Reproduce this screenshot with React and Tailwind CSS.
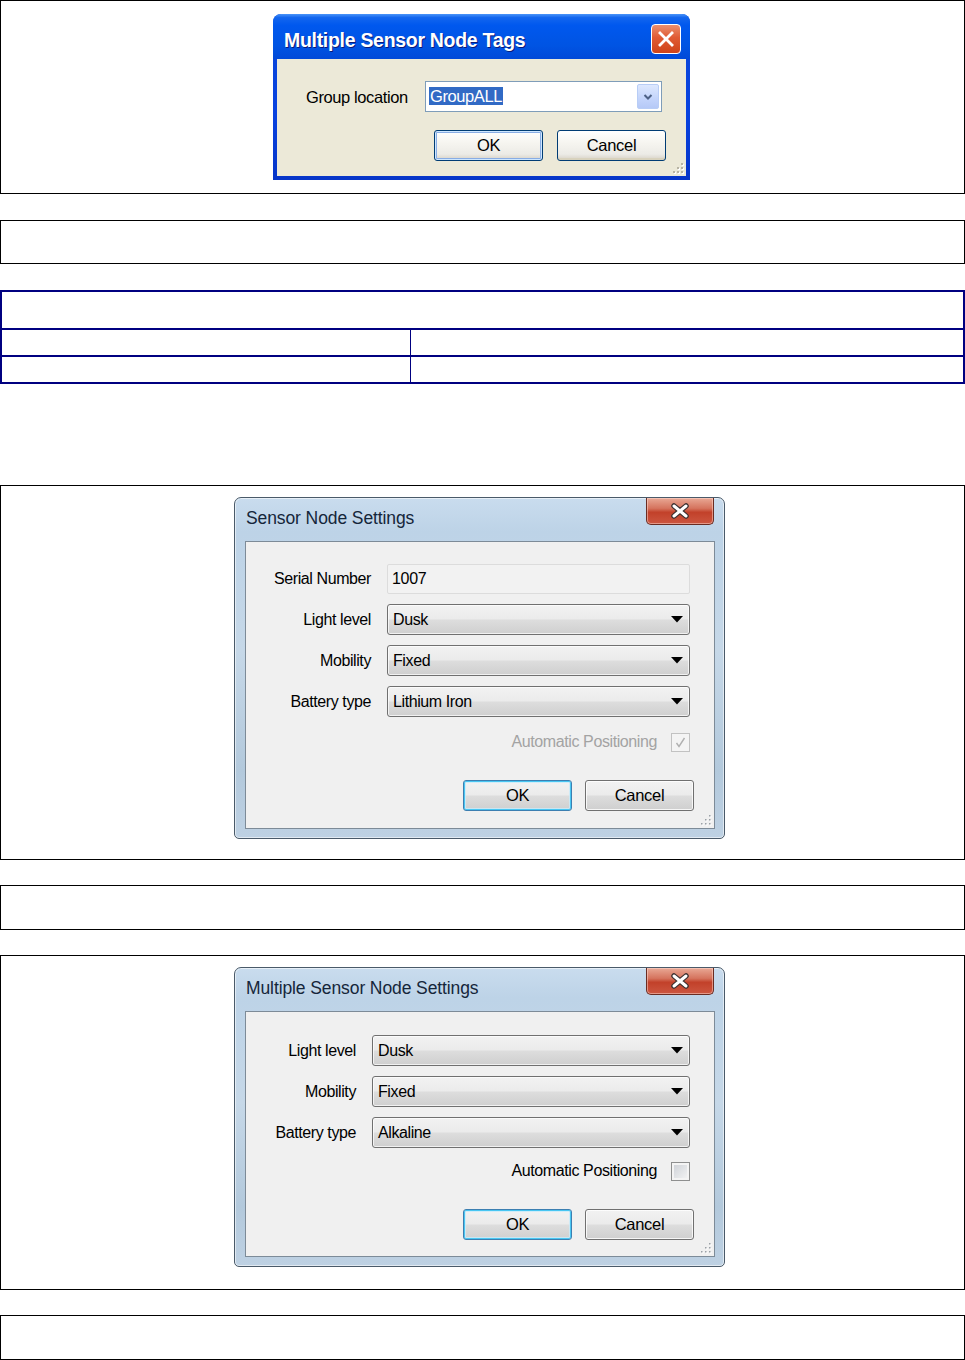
import React from "react";

const F = "font-['Liberation_Sans',Arial,sans-serif]";

function XPGrip() {
  const dots = [
    [10, 2], [10, 6], [6, 6], [10, 10], [6, 10], [2, 10],
  ];
  return (
    <svg width="14" height="14" viewBox="0 0 14 14">
      {dots.map(([x, y], i) => (
        <g key={i}>
          <rect x={x + 1} y={y + 1} width="2" height="2" fill="#ffffff" />
          <rect x={x} y={y} width="2" height="2" fill="#b8b4a4" />
        </g>
      ))}
    </svg>
  );
}

function W7Grip() {
  const dots = [
    [9, 1], [9, 5], [5, 5], [9, 9], [5, 9], [1, 9],
  ];
  return (
    <svg width="12" height="12" viewBox="0 0 12 12">
      {dots.map(([x, y], i) => (
        <g key={i}>
          <rect x={x + 1} y={y + 1} width="1.5" height="1.5" fill="#ffffff" />
          <rect x={x} y={y} width="1.5" height="1.5" fill="#9aa0a6" />
        </g>
      ))}
    </svg>
  );
}

function XPButton({ children, focused }) {
  return (
    <div
      className={`flex h-[31px] w-[109px] items-center justify-center rounded-[3px] border border-[#003c74] bg-[linear-gradient(180deg,#ffffff_0%,#f6f5f0_40%,#ecebe6_80%,#d6d0c5_100%)] text-[16.5px] tracking-[-0.3px] text-black ${
        focused ? "shadow-[inset_0_0_0_1px_#cee7ff,inset_0_0_0_2px_#89ade4]" : "shadow-[inset_0_-2px_0_#d8d2bd]"
      }`}
    >
      {children}
    </div>
  );
}

function XPDialog() {
  return (
    <div className={`flex h-[166px] w-[417px] flex-col rounded-t-[8px] bg-[linear-gradient(180deg,#0a47d8_0%,#0842e0_60%,#0635c8_100%)] ${F}`}>
      <div className="flex h-[46px] items-start justify-between rounded-t-[8px] bg-[linear-gradient(180deg,#4a94f8_0%,#1366ee_8%,#0058ee_25%,#0054e3_70%,#0149d8_100%)] pl-[11px] pr-[9px]">
        <div className="pt-[15px] text-[19.5px] font-bold leading-[22px] tracking-[-0.3px] text-white [text-shadow:1px_1px_0_#0a1a7a]">
          Multiple Sensor Node Tags
        </div>
        <div className="mt-[10px] flex h-[30px] w-[30px] items-center justify-center rounded-[4px] border border-white bg-[linear-gradient(180deg,#ea8f6e_0%,#e05b34_45%,#cf4319_100%)]">
          <svg width="18" height="18" viewBox="0 0 18 18">
            <path d="M3 3 L15 15 M15 3 L3 15" stroke="#ffffff" strokeWidth="2.8" strokeLinecap="square" />
          </svg>
        </div>
      </div>
      <div className="mx-[4px] mb-[4px] flex flex-1 flex-col bg-[#ece9d8]">
        <div className="mt-[22px] flex items-center pl-[29px]">
          <div className="w-[119px] pt-[2px] text-[16.5px] tracking-[-0.4px] text-black">Group location</div>
          <div className="flex h-[31px] w-[237px] items-center border border-[#7f9db9] bg-white pl-[3px] pr-[2px]">
            <div className="flex-1">
              <span className="bg-[#316ac5] px-[1px] text-[16.5px] leading-[20px] tracking-[-0.4px] text-white">GroupALL</span>
            </div>
            <div className="flex h-[25px] w-[22px] items-center justify-center rounded-[2px] border border-[#b8cdf6] bg-[linear-gradient(180deg,#dde8fe_0%,#c3d4fb_60%,#b5c9f7_100%)]">
              <svg width="10" height="8" viewBox="0 0 10 8">
                <path d="M1.5 2 L5 5.5 L8.5 2" stroke="#4d6185" strokeWidth="2" fill="none" />
              </svg>
            </div>
          </div>
        </div>
        <div className="mt-[18px] flex justify-end gap-[14px] pr-[20px]">
          <XPButton focused>OK</XPButton>
          <XPButton>Cancel</XPButton>
        </div>
        <div className="mt-auto flex justify-end pb-[1px] pr-[1px]">
          <XPGrip />
        </div>
      </div>
    </div>
  );
}

function Combo({ value, width }) {
  return (
    <div
      className={`flex h-[31px] ${width} items-center rounded-[3px] border border-[#707070] bg-[linear-gradient(180deg,#f2f2f2_0%,#ebebeb_48%,#dddddd_52%,#cfcfcf_100%)] pl-[5px] pr-[6px] shadow-[inset_0_0_0_1px_rgba(255,255,255,0.7)]`}
    >
      <div className="flex-1 text-[16px] tracking-[-0.4px] text-black">{value}</div>
      <svg width="12" height="7" viewBox="0 0 12 7">
        <path d="M0 0 L12 0 L6 6.5 Z" fill="#000000" />
      </svg>
    </div>
  );
}

function W7Button({ children, focused }) {
  return (
    <div
      className={`flex h-[31px] w-[109px] items-center justify-center rounded-[3px] border bg-[linear-gradient(180deg,#f2f2f2_0%,#ebebeb_48%,#dddddd_52%,#cfcfcf_100%)] text-[16.5px] tracking-[-0.3px] text-black ${
        focused
          ? "border-[#3c7fb1] shadow-[inset_0_0_0_1px_#48c6f2,inset_0_0_0_2px_rgba(200,235,250,0.8)]"
          : "border-[#707070] shadow-[inset_0_0_0_1px_rgba(255,255,255,0.8)]"
      }`}
    >
      {children}
    </div>
  );
}

function W7Check({ checked, disabled }) {
  return (
    <div
      className={`flex h-[19px] w-[19px] items-center justify-center border ${
        disabled
          ? "border-[#c2c2c2] bg-[#f4f4f4]"
          : "border-[#8e8f8f] bg-[linear-gradient(135deg,#cbcfd5_0%,#f6f6f6_100%)] shadow-[inset_0_0_0_2px_#f4f4f4]"
      }`}
    >
      {checked && (
        <svg width="13" height="13" viewBox="0 0 13 13">
          <path d="M2.5 7 L5 10.5 L10.5 2" stroke={disabled ? "#b0b0b0" : "#333"} strokeWidth="1.4" fill="none" />
        </svg>
      )}
    </div>
  );
}

function W7Dialog({ title, height, labelW, comboW, serial, rows, autoDisabled, autoChecked, padTop, checkMt, btnMt }) {
  return (
    <div
      className={`flex ${height} w-[491px] flex-col rounded-t-[7px] rounded-b-[5px] border border-[#4a5a69] bg-[linear-gradient(180deg,#c9dcee_0%,#bdd3e7_10%,#c6d8e8_45%,#b3c9dc_80%,#bed1e3_100%)] shadow-[inset_0_0_0_1px_rgba(255,255,255,0.55)] ${F}`}
    >
      <div className="flex h-[43px] items-start justify-between pl-[11px] pr-[10px]">
        <div className="pt-[10px] text-[17.5px] leading-[20px] tracking-[-0.1px] text-[#15263a]">{title}</div>
        <div className="flex h-[27px] w-[68px] items-center justify-center rounded-b-[5px] border border-t-0 border-[#6a2c22] bg-[linear-gradient(180deg,#e9a895_0%,#d5735d_40%,#c2412a_55%,#cc5640_100%)] shadow-[inset_0_0_0_1px_rgba(255,220,210,0.5)]">
          <svg width="22" height="16" viewBox="0 0 22 16">
            <path d="M5 3 L17 13 M17 3 L5 13" stroke="#3c3030" strokeWidth="5.5" strokeLinecap="round" />
            <path d="M5 3 L17 13 M17 3 L5 13" stroke="#ffffff" strokeWidth="3" strokeLinecap="round" />
          </svg>
        </div>
      </div>
      <div className="mb-[9px] ml-[10px] mr-[9px] flex flex-1 flex-col border border-[#7d8b98] bg-[#f0f0f0]">
        <div className={`flex flex-col gap-[10px] ${padTop}`}>
          {serial && (
            <div className="flex items-center">
              <div className={`${labelW} pr-[16px] text-right text-[16px] tracking-[-0.4px] text-black`}>Serial Number</div>
              <div className={`flex h-[30px] ${comboW} items-center rounded-[2px] border border-[#dcdcdc] bg-[#f2f2f2] pl-[4px] text-[16px] tracking-[-0.3px] text-black`}>
                {serial}
              </div>
            </div>
          )}
          {rows.map(([label, value]) => (
            <div key={label} className="flex items-center">
              <div className={`${labelW} pr-[16px] text-right text-[16px] tracking-[-0.4px] text-black`}>{label}</div>
              <Combo value={value} width={comboW} />
            </div>
          ))}
        </div>
        <div className={`${checkMt} flex items-center justify-end gap-[14px] pr-[24px]`}>
          <div className={`text-[16px] tracking-[-0.4px] ${autoDisabled ? "text-[#a3a3a3]" : "text-black"}`}>
            Automatic Positioning
          </div>
          <W7Check checked={autoChecked} disabled={autoDisabled} />
        </div>
        <div className={`${btnMt} flex justify-end gap-[13px] pr-[20px]`}>
          <W7Button focused>OK</W7Button>
          <W7Button>Cancel</W7Button>
        </div>
        <div className="mt-auto flex justify-end pb-[2px] pr-[2px]">
          <W7Grip />
        </div>
      </div>
    </div>
  );
}

export default function App() {
  return (
    <div className="w-[965px] bg-white">
      <div className="h-[194px] border border-black pl-[272px] pt-[13px]">
        <XPDialog />
      </div>

      <div className="mt-[26px] h-[44px] border border-black" />

      <div className="mt-[26px] flex h-[94px] flex-col border-2 border-[#000080]">
        <div className="h-[36px]" />
        <div className="flex h-[27px] border-t-2 border-[#000080]">
          <div className="w-[409px] border-r border-[#000080]" />
          <div className="flex-1" />
        </div>
        <div className="flex flex-1 border-t-2 border-[#000080]">
          <div className="w-[409px] border-r border-[#000080]" />
          <div className="flex-1" />
        </div>
      </div>

      <div className="mt-[101px] h-[375px] border border-black pl-[233px] pt-[11px]">
        <W7Dialog
          title="Sensor Node Settings"
          height="h-[342px]"
          labelW="w-[141px]"
          comboW="w-[303px]"
          serial="1007"
          rows={[
            ["Light level", "Dusk"],
            ["Mobility", "Fixed"],
            ["Battery type", "Lithium Iron"],
          ]}
          autoDisabled
          autoChecked
          padTop="pt-[22px]"
          checkMt="mt-[13px]"
          btnMt="mt-[26px]"
        />
      </div>

      <div className="mt-[25px] h-[45px] border border-black" />

      <div className="mt-[25px] h-[335px] border border-black pl-[233px] pt-[11px]">
        <W7Dialog
          title="Multiple Sensor Node Settings"
          height="h-[300px]"
          labelW="w-[126px]"
          comboW="w-[318px]"
          rows={[
            ["Light level", "Dusk"],
            ["Mobility", "Fixed"],
            ["Battery type", "Alkaline"],
          ]}
          padTop="pt-[23px]"
          checkMt="mt-[11px]"
          btnMt="mt-[26px]"
        />
      </div>

      <div className="mt-[25px] h-[45px] border border-black" />
    </div>
  );
}
